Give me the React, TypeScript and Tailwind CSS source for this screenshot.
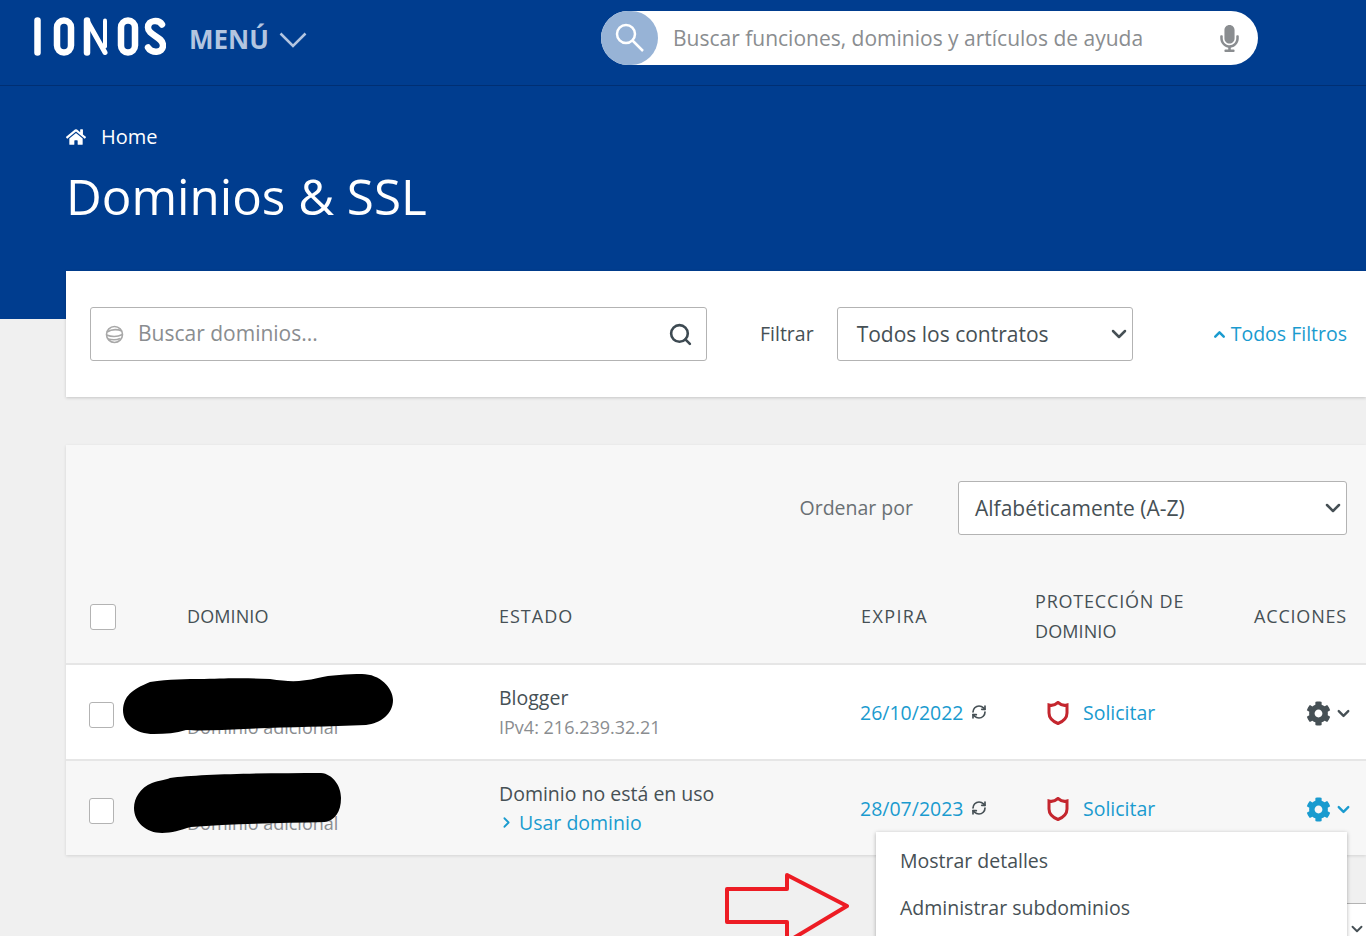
import { ChevronDown, ChevronRight, ChevronUp, RefreshCw, Search } from "lucide-react";
import { FaCog, FaHome, FaMicrophone } from "react-icons/fa";

const font = "font-['Open_Sans','Noto_Sans',sans-serif]";

const Logo = () => (
  <svg width="132" height="40" viewBox="0 0 132 40" fill="none" stroke="#fff" strokeWidth="6.5" strokeLinecap="round" strokeLinejoin="round">
    <path d="M3.5 3.5v32" />
    <rect x="23" y="3.5" width="14" height="32" rx="7" />
    <path d="M53 35.500v-32" />
    <path d="M53 3.500l18 32" strokeWidth="5" />
    <path d="M71 3.500v26" strokeWidth="4" />
    <rect x="87" y="3.500" width="14" height="32" rx="7" />
    <path d="M128 7.500c-3-5-14-5-14 3 0 8 15 9 15 18 0 8-12 8-15 2" />
  </svg>
);

const Shield = () => (
  <svg width="22" height="24" viewBox="0 0 22 24" fill="none" stroke="#c4262e" strokeWidth="3">
    <path d="M2 4C5 5 8 4 11 1.500 14 4 17 5 20 4V12C20 17 16 20.500 11 22.500 6 20.500 2 17 2 12z" />
  </svg>
);

const Check = ({ w = "w-[25px]" }: { w?: string }) => <span className={`block h-[26px] ${w} rounded-[3px] border border-[#b3b3b3] bg-white`} />;

const Select = ({ label, w }: { label: string; w: string }) => (
  <div className={`flex h-[54px] ${w} items-center justify-between rounded-[3px] border border-[#b3b3b3] bg-white text-[21px] text-[#465055]`}>
    <span className="pt-[2px]">{label}</span>
    <ChevronDown size={24} strokeWidth={2.5} className="mr-[1px] text-[#465055]" />
  </div>
);

const Row = ({ state, sub, link, date, alt, active }: { state: string; sub?: string; link?: string; date: string; alt?: boolean; active?: boolean }) => (
  <div className={`relative grid grid-cols-[121px_312px_361px_175px_1fr_auto] items-center ${alt ? "h-[94px] bg-[#f7f7f7]" : "h-[96px] bg-white border-b-2 border-[#e6e6e6]"}`}>
    <div className="pl-[23px] pt-[6px]"><Check /></div>
    <div className="pt-[30px] text-[18px] text-[#8a8d90]">Dominio adicional</div>
    <div className="leading-[29px]">
      <div className="text-[19.5px] text-[#465055]">{state}</div>
      {sub && <div className="mt-[1px] text-[18px] text-[#8a8d90]">{sub}</div>}
      {link && (
        <div className="flex items-center text-[19.5px] text-[#1a9bcf]">
          <ChevronRight size={17} strokeWidth={2.5} className="-ml-[1px] mr-[4px]" />
          {link}
        </div>
      )}
    </div>
    <div className="flex items-start pt-[2px] text-[19.5px] text-[#1a9bcf]">
      {date}
      <RefreshCw size={16} strokeWidth={2.5} className="ml-[7px] mt-[6px] text-[#465055]" />
    </div>
    <div className="flex items-center pl-[12px] pt-[2px] text-[19.5px] text-[#1a9bcf]">
      <Shield />
      <span className="ml-[14px]">Solicitar</span>
    </div>
    <div className={`flex items-center pr-[13px] pt-[2px] ${active ? "text-[#1a9bcf]" : "text-[#465055]"}`}>
      <FaCog size={25} />
      <ChevronDown size={19} strokeWidth={3} className="ml-[3px] mt-[1px]" />
    </div>
  </div>
);

export default function App() {
  return (
    <div className={`relative h-[936px] overflow-hidden bg-[#f0f0f0] ${font}`}>
      <div className="h-[319px] bg-[#003d8f]">
        <header className="flex h-[86px] items-center border-b border-[#002f73] pb-[9px] pl-[34px]">
          <div className="-mt-[2px]"><Logo /></div>
          <div className="ml-[23px] mt-[2px] flex items-center text-[26px] font-bold text-[#b3c5e0]">
            MENÚ
            <svg width="28" height="16" viewBox="0 0 28 16" fill="none" stroke="#b3c5e0" strokeWidth="2.500" className="ml-[10px] mt-[2px]">
              <path d="M1.500 1.500L14 14 26.500 1.500" />
            </svg>
          </div>
          <div className="ml-auto mr-[108px] flex h-[54px] w-[657px] items-center rounded-full bg-white pr-[15px]">
            <div className="flex h-[54px] w-[57px] items-center justify-center rounded-full bg-[#97b3d6]">
              <svg width="30" height="30" viewBox="0 0 30 30" fill="none" stroke="#fff" strokeWidth="2.500">
                <circle cx="11" cy="11" r="9" />
                <path d="M17.500 17.500L28 28" />
              </svg>
            </div>
            <span className="ml-[15px] flex-1 pt-[2px] text-[21px] text-[#8a8d90]">Buscar funciones, dominios y artículos de ayuda</span>
            <FaMicrophone size={27} className="text-[#8a8d90]" />
          </div>
        </header>
        <div className="pl-[66px] text-white">
          <div className="mt-[37px] flex items-center text-[20px] leading-[28px]">
            <FaHome size={20} />
            <span className="ml-[15px]">Home</span>
          </div>
          <h1 className="mt-[14px] text-[49.3px] leading-[62px]">Dominios &amp; SSL</h1>
        </div>
      </div>

      <div className="-mt-[48px] ml-[66px] flex h-[126px] items-center bg-white pl-[24px] pr-[19px] shadow-[0_1px_3px_rgba(0,0,0,0.18)]">
        <div className="flex h-[54px] w-[617px] items-center rounded-[3px] border border-[#b3b3b3] pl-[14px] pr-[13px]">
          <svg width="19" height="19" viewBox="0 0 19 19" fill="none" stroke="#a8a8a8" strokeWidth="1.600">
            <circle cx="9.500" cy="9.500" r="8" />
            <path d="M2 7c4-2.500 10-3 15-1M1.500 10c5 2 11 2 16-.5M3 14c4 1 9 1 12-.5" />
          </svg>
          <span className="ml-[14px] flex-1 text-[21px] text-[#8a8d90]">Buscar dominios...</span>
          <Search size={25} strokeWidth={2.5} className="text-[#3d4a52]" />
        </div>
        <span className="ml-[53px] text-[19.5px] text-[#465055]">Filtrar</span>
        <div className="ml-[23px]"><Select label="Todos los contratos" w="w-[296px] pl-[19px]" /></div>
        <div className="ml-auto flex items-center text-[19.5px] text-[#1a9bcf]">
          <ChevronUp size={17} strokeWidth={3.5} className="mr-[3px]" />
          Todos Filtros
        </div>
      </div>

      <div className="ml-[66px] mt-[48px] bg-[#f7f7f7] shadow-[0_1px_3px_rgba(0,0,0,0.12)]">
        <div className="flex h-[128px] items-center justify-end pb-[2px] pr-[19px]">
          <span className="text-[19.5px] text-[#6a7074]">Ordenar por</span>
          <div className="ml-[45px]"><Select label="Alfabéticamente (A-Z)" w="w-[389px] pl-[16px]" /></div>
        </div>
        <div className="grid h-[92px] grid-cols-[121px_312px_361px_175px_1fr_auto] items-center border-b-2 border-[#e6e6e6] pb-[5px] text-[18px] leading-[30px] tracking-[0.8px] text-[#465055]">
          <div className="pl-[24px] pt-[3px]"><Check w="w-[26px]" /></div>
          <div className="tracking-[0.1px]">DOMINIO</div>
          <div className="tracking-[1px]">ESTADO</div>
          <div className="pl-[1px] tracking-[1.4px]">EXPIRA</div>
          <div className="w-[170px]">PROTECCIÓN DE <span className="tracking-[0.1px]">DOMINIO</span></div>
          <div className="pr-[19px]">ACCIONES</div>
        </div>
        <Row state="Blogger" sub="IPv4: 216.239.32.21" date="26/10/2022" />
        <Row state="Dominio no está en uso" link="Usar dominio" date="28/07/2023" alt active />
      </div>

      {/* select asomando por debajo del menu */}
      <div className="absolute left-[1100px] top-[903px] flex h-[54px] w-[300px] justify-end rounded-[3px] border border-[#b3b3b3] bg-white pr-[33px] pt-[16px] text-[#465055]">
        <ChevronDown size={18} strokeWidth={2.5} />
      </div>

      {/* menu de acciones */}
      <div className="absolute left-[876px] top-[832px] h-[140px] w-[471px] bg-white pl-[24px] pt-[5px] text-[19.5px] leading-[47px] text-[#465055] shadow-[0_1px_4px_rgba(0,0,0,0.3)]">
        <div>Mostrar detalles</div>
        <div>Administrar subdominios</div>
      </div>

      {/* tachones de la captura */}
      <svg className="absolute left-[120px] top-[670px]" width="280" height="170" viewBox="0 0 280 170" fill="#000">
        <path d="M3 40C4 26 11 20 30 12c20-3 35-3 54-3 30-1 45-1 66 0 20 3 30 3 48-1 12-3 30-4 44-4 18 0 31 14 31 26 0 14-12 23-27 25-40 2-85 2-122 4-20 1-44 2-58 1-10 3-20 4-32 4C15 64 3 54 3 40z" />
        <path d="M14 138C14 128 20 118 32 113 40 110 45 110 50 108 80 104 150 103 201 103 213 104 221 116 221 128 221 142 215 150 205 152 160 153 110 154 71 157 60 160 52 163 42 163 26 163 14 152 14 138z" />
      </svg>

      {/* flecha roja */}
      <svg className="absolute left-[720px] top-[868px]" width="134" height="68" viewBox="0 0 134 68" fill="none" stroke="#ed1c24" strokeWidth="4" strokeLinejoin="round">
        <path d="M7 21h60V7l60 31-60 36V54H7z" />
      </svg>
    </div>
  );
}
